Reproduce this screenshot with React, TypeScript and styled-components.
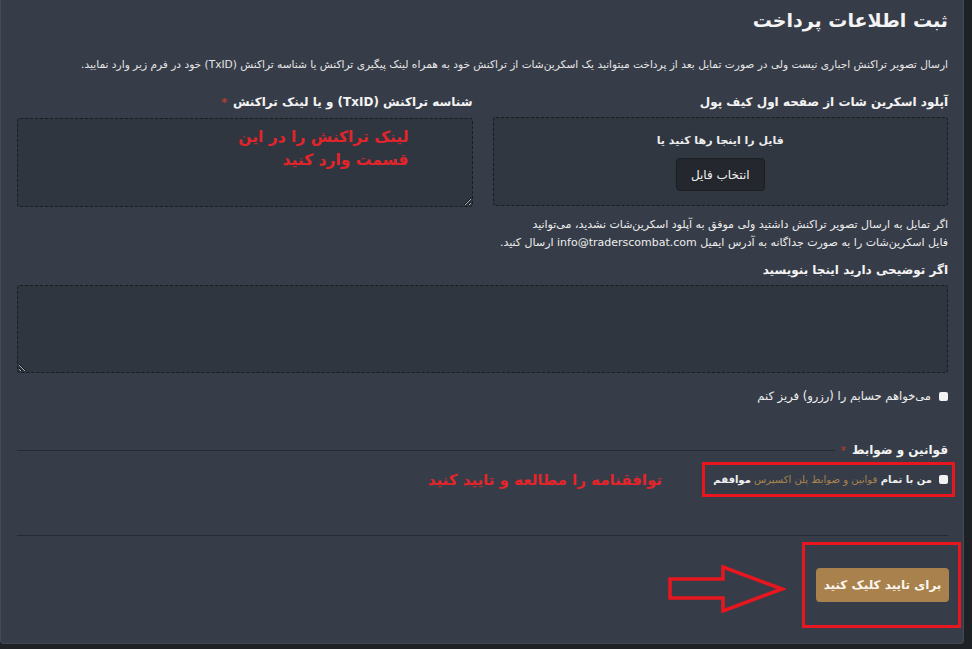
import React from 'react';
import styled, { createGlobalStyle } from 'styled-components';

const GlobalStyle = createGlobalStyle`
  html, body {
    margin: 0;
    padding: 0;
    background: #1e2227;
  }
  body {
    font-family: "DejaVu Sans", "Noto Sans", sans-serif;
    color: #f1f1f1;
    overflow: hidden;
  }
`;

const Card = styled.div`
  direction: rtl;
  box-sizing: border-box;
  width: 964px;
  height: 644px;
  background: #373d48;
  border: 1px solid #444a55;
  border-top: none;
  border-radius: 0 0 4px 4px;
  padding: 6px 15px 0 16px;
`;

const Title = styled.h2`
  margin: 0;
  font-size: 19px;
  line-height: 28px;
  font-weight: 700;
  color: #f4f4f4;
`;

const Intro = styled.p`
  margin: 20px 0 0;
  font-size: 10.6px;
  line-height: 20px;
  color: #e6e6e6;
  white-space: nowrap;
`;

const Columns = styled.div`
  display: grid;
  grid-template-columns: 1fr 1fr;
  column-gap: 20px;
  margin-top: 19px;
`;

const Field = styled.div`
  display: flex;
  flex-direction: column;
  position: relative;
`;

const Label = styled.label<{ $top?: number }>`
  display: block;
  margin-top: ${(p) => p.$top ?? 0}px;
  margin-bottom: 6px;
  font-size: 12px;
  line-height: 18px;
  font-weight: 700;
  color: #f4f4f4;
`;

const Required = styled.span`
  color: #c0392b;
  margin-right: 6px;
  font-size: 11px;
`;

const DropZone = styled.div`
  box-sizing: border-box;
  height: 89px;
  border: 1px dashed #191c21;
  border-radius: 3px;
  background: #313741;
  display: flex;
  flex-direction: column;
  align-items: center;
  padding-top: 15px;
  gap: 9px;
`;

const DropHint = styled.span`
  font-size: 11px;
  line-height: 16px;
  font-weight: 700;
  color: #eeeeee;
`;

const PickButton = styled.button`
  width: 89px;
  height: 33px;
  font-family: inherit;
  font-size: 12px;
  color: #f2f2f2;
  background: #24282e;
  border: 1px solid #1a1d21;
  border-radius: 4px;
`;

const Area = styled.textarea<{ $height: number }>`
  box-sizing: border-box;
  display: block;
  width: 100%;
  height: ${(p) => p.$height}px;
  background: #30363f;
  border: 1px dashed #191c21;
  border-radius: 3px;
  color: #eeeeee;
  color-scheme: dark;
  font-family: inherit;
  resize: vertical;
  outline: none;
`;

const Scribble = styled.div`
  position: absolute;
  top: 33px;
  right: 64px;
  direction: rtl;
  font-family: "DejaVu Sans", sans-serif;
  font-size: 15.5px;
  line-height: 23px;
  font-weight: 700;
  color: #e3252b;
  pointer-events: none;
`;

const Note = styled.p`
  margin: 10px 0 0;
  font-size: 11px;
  line-height: 18px;
  color: #eeeeee;
  white-space: nowrap;
`;

const CheckRow = styled.label<{ $top: number }>`
  display: flex;
  align-items: center;
  gap: 8px;
  margin-top: ${(p) => p.$top}px;
  font-size: 11.5px;
  line-height: 18px;
  color: #f0f0f0;
`;

const Box = styled.span`
  width: 9px;
  height: 9px;
  background: #f2f2f2;
  border-radius: 2px;
  flex: none;
`;

const LegendRow = styled.div`
  display: flex;
  align-items: center;
  margin-top: 36px;
`;

const Legend = styled.span`
  font-size: 12px;
  line-height: 18px;
  font-weight: 700;
  color: #f4f4f4;
`;

const Rule = styled.div`
  flex: 1;
  height: 1px;
  margin-right: 5px;
  background: #272b31;
`;

const TermsRow = styled.div`
  display: flex;
  align-items: center;
  margin-top: 3px;
  margin-right: -7px;
`;

const Highlight = styled.div`
  display: flex;
  align-items: center;
  gap: 7px;
  box-sizing: border-box;
  width: 253px;
  height: 35px;
  border: 3px solid #e8161e;
  padding: 0 4px 0 0;
  font-size: 10px;
  color: #f0f0f0;
  white-space: nowrap;
`;

const Strong = styled.b`
  font-weight: 700;
`;

const Gold = styled.span`
  color: #a6834f;
`;

const Callout = styled.span`
  margin-right: 40px;
  font-size: 15px;
  font-weight: 700;
  color: #e3252b;
`;

const Divider = styled.div`
  height: 1px;
  background: #272b31;
  margin-top: 38px;
`;

const Footer = styled.div`
  display: flex;
  align-items: center;
  gap: 16px;
  margin-top: 6px;
  margin-right: -13px;
`;

const ButtonFrame = styled.div`
  box-sizing: border-box;
  width: 159px;
  height: 86px;
  border: 3px solid #e8161e;
  padding: 23px 9px 0 11px;
`;

const Submit = styled.button`
  width: 133px;
  height: 34px;
  border: none;
  border-radius: 4px;
  background: #a8814c;
  color: #fbf6ee;
  font-family: inherit;
  font-size: 12px;
  font-weight: 700;
`;

const Arrow = styled.svg`
  margin-top: 8px;
  flex: none;
`;

export default function App() {
  return (
    <>
      <GlobalStyle />
      <Card>
        <Title>ثبت اطلاعات پرداخت</Title>
        <Intro>
          ارسال تصویر تراکنش اجباری نیست ولی در صورت تمایل بعد از پرداخت میتوانید یک اسکرین‌شات از تراکنش خود به همراه لینک پیگیری تراکنش یا شناسه تراکنش (TxID) خود در فرم زیر وارد نمایید.
        </Intro>

        <Columns>
          <Field>
            <Label>آپلود اسکرین شات از صفحه اول کیف پول</Label>
            <DropZone>
              <DropHint>فایل را اینجا رها کنید یا</DropHint>
              <PickButton type="button">انتخاب فایل</PickButton>
            </DropZone>
            <Note>
              اگر تمایل به ارسال تصویر تراکنش داشتید ولی موفق به آپلود اسکرین‌شات نشدید، می‌توانید
              <br />
              فایل اسکرین‌شات را به صورت جداگانه به آدرس ایمیل info@traderscombat.com ارسال کنید.
            </Note>
          </Field>
          <Field>
            <Label>
              شناسه تراکنش (TxID) و یا لینک تراکنش<Required>*</Required>
            </Label>
            <Area $height={89} dir="ltr" />
            <Scribble>
              لینک تراکنش را در این
              <br />
              قسمت وارد کنید
            </Scribble>
          </Field>
        </Columns>

        <Label $top={9}>اگر توضیحی دارید اینجا بنویسید</Label>
        <Area $height={88} dir="rtl" />

        <CheckRow $top={14}>
          <Box />
          می‌خواهم حسابم را (رزرو) فریز کنم
        </CheckRow>

        <LegendRow>
          <Legend>قوانین و ضوابط</Legend>
          <Required>*</Required>
          <Rule />
        </LegendRow>

        <TermsRow>
          <Highlight>
            <Box />
            <span>
              <Strong>من با تمام </Strong>
              <Gold>قوانین و ضوابط پلن اکسپرس </Gold>
              <Strong>موافقم</Strong>
            </span>
          </Highlight>
          <Callout>توافقنامه را مطالعه و تایید کنید</Callout>
        </TermsRow>

        <Divider />

        <Footer>
          <ButtonFrame>
            <Submit type="button">برای تایید کلیک کنید</Submit>
          </ButtonFrame>
          <Arrow width="118" height="48" viewBox="0 0 118 48">
            <path
              d="M2 14 H55 V2 L114 24 L55 46 V33 H2 Z"
              fill="none"
              stroke="#e8161e"
              strokeWidth="3.5"
              strokeLinejoin="miter"
            />
          </Arrow>
        </Footer>
      </Card>
    </>
  );
}
